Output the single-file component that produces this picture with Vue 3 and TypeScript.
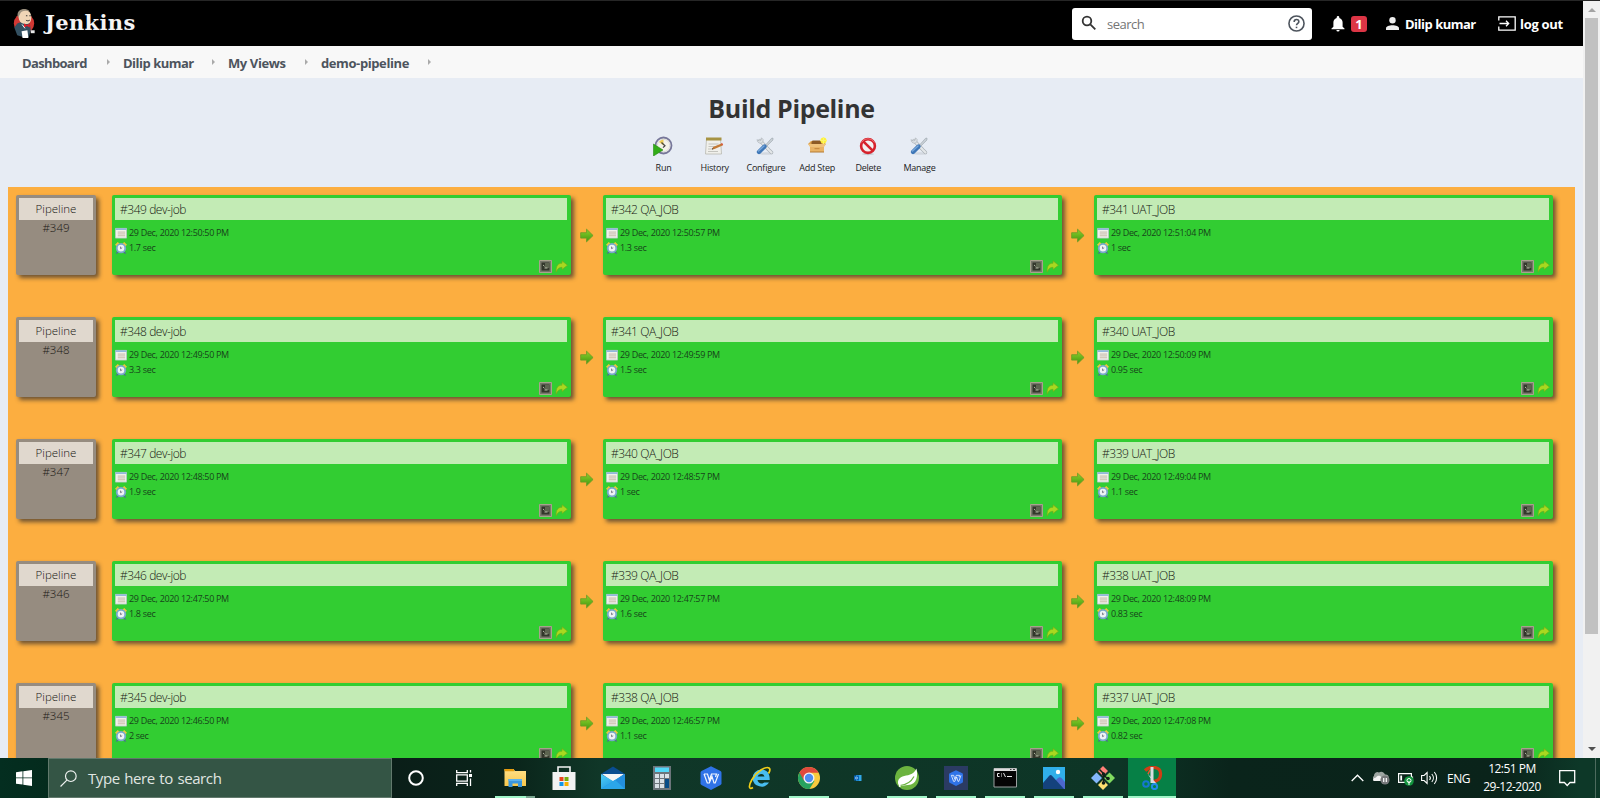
<script setup lang="ts">
interface Stage { name: string; date: string; duration: string }
interface PipelineRow { number: string; stages: Stage[] }
interface TaskItem { icon: string; open?: boolean; active?: boolean; stacked?: boolean }

const crumbs: string[] = ['Dashboard', 'Dilip kumar', 'My Views', 'demo-pipeline']

const tools: { label: string; icon: string }[] = [
  { label: 'Run', icon: 'run' },
  { label: 'History', icon: 'history' },
  { label: 'Configure', icon: 'tools' },
  { label: 'Add Step', icon: 'box' },
  { label: 'Delete', icon: 'delete' },
  { label: 'Manage', icon: 'tools' },
]

const row = (n: number, times: string[], durations: string[]): PipelineRow => ({
  number: `#${n}`,
  stages: [`#${n} dev-job`, `#${n - 7} QA_JOB`, `#${n - 8} UAT_JOB`].map((name, i) => ({
    name,
    date: `29 Dec, 2020 ${times[i]} PM`,
    duration: `${durations[i]} sec`,
  })),
})

const rows: PipelineRow[] = [
  row(349, ['12:50:50', '12:50:57', '12:51:04'], ['1.7', '1.3', '1']),
  row(348, ['12:49:50', '12:49:59', '12:50:09'], ['3.3', '1.5', '0.95']),
  row(347, ['12:48:50', '12:48:57', '12:49:04'], ['1.9', '1', '1.1']),
  row(346, ['12:47:50', '12:47:57', '12:48:09'], ['1.8', '1.6', '0.83']),
  row(345, ['12:46:50', '12:46:57', '12:47:08'], ['2', '1.1', '0.82']),
]

const tasks: TaskItem[] = [
  { icon: 'explorer', open: true, stacked: true },
  { icon: 'store' },
  { icon: 'mail' },
  { icon: 'calc' },
  { icon: 'wps' },
  { icon: 'ie' },
  { icon: 'chrome', open: true },
  { icon: 'outlook' },
  { icon: 'spring', open: true },
  { icon: 'wpsbox', open: true },
  { icon: 'cmd', open: true },
  { icon: 'photos', open: true },
  { icon: 'git', open: true },
  { icon: 'snip', open: true, active: true },
]
</script>

<template>
  <div class="screen">
    <svg class="defs" aria-hidden="true">
      <defs>
        <linearGradient id="gArrow" x1="0" y1="0" x2="0" y2="1">
          <stop offset="0" stop-color="#8fd02c" /><stop offset="1" stop-color="#3f9a10" />
        </linearGradient>
        <linearGradient id="gMail" x1="0" y1="0" x2="1" y2="1">
          <stop offset="0" stop-color="#4fd0f8" /><stop offset="1" stop-color="#1385d8" />
        </linearGradient>
        <linearGradient id="gFolder" x1="0" y1="0" x2="0" y2="1">
          <stop offset="0" stop-color="#ffe08a" /><stop offset="1" stop-color="#f9c84a" />
        </linearGradient>
      </defs>
      <symbol id="i-run" viewBox="0 0 20 20">
        <circle cx="10.5" cy="9.5" r="8" fill="#f3f3ea" stroke="#77779a" stroke-width="1.8" />
        <circle cx="10.5" cy="9.5" r="6.2" fill="none" stroke="#c9c9cf" stroke-width=".6" />
        <path d="M10.500 9.500V3.500A6 6 0 0 0 6 6z" fill="#edcd55" />
        <path d="M8.500 6.500l3.500 3.200-2 2" fill="none" stroke="#444" stroke-width="1.200" />
        <path d="M.5 8l9.500 6L.5 20z" fill="#32ad17" stroke="#278a14" stroke-width=".6" />
      </symbol>
      <symbol id="i-history" viewBox="0 0 20 20">
        <path d="M2.500 3h14l1 15h-16z" fill="#f0f0eb" stroke="#b9b9b0" stroke-width=".8" />
        <path d="M2 1.500h15.500v3H2z" fill="#a69343" />
        <path d="M4.500 8h10M4.500 10.500h8M4 13h5M4 15.500h10" stroke="#c4c4be" />
        <path d="M8 13.500l1-2.500 8.500-3.500 1 2-8 3.500z" fill="#c47a35" />
        <path d="M17 7.500l1.200-.4 1 2-1.200.5z" fill="#d95035" /><path d="M8 13.500l.5-1.500 1 1z" fill="#333" />
      </symbol>
      <symbol id="i-tools" viewBox="0 0 20 20">
        <ellipse cx="11" cy="17.500" rx="7" ry="1.300" fill="#d3d8df" />
        <path d="M5 4.500l9 9.500 2.500 2.500" stroke="#a8afb5" stroke-width="3.400" stroke-linecap="round" />
        <path d="M5 4.500l9 9.500 2.500 2.500" stroke="#e4e7e9" stroke-width="2.200" stroke-linecap="round" />
        <path d="M2.200 3.500a3.200 3.200 0 0 0 5.500 2.700A3.200 3.200 0 0 0 6.500 1.800L6 4.500 3.500 5z" fill="#dfe3e6" stroke="#a6adb3" stroke-width=".6" />
        <path d="M18 2l-1.500.3-6 6.700 1.300 1.200L18 4z" fill="#c7ced4" stroke="#929ca5" stroke-width=".5" />
        <path d="M9.500 10.500L4 16" stroke="#3f77b7" stroke-width="4.400" stroke-linecap="round" />
        <path d="M9 10L3.500 15" stroke="#78a8dc" stroke-width="1.400" stroke-linecap="round" />
      </symbol>
      <symbol id="i-box" viewBox="0 0 20 20">
        <path d="M1 8l3-3h11l4 3-2 2H3z" fill="#dda24e" /><path d="M4.500 6.500l1-2h8l1 2v3h-10z" fill="#8d5a26" />
        <path d="M3 9h14v7H3z" fill="#e9b365" /><path d="M1 8l2 3h14l2-3z" fill="#f0c27c" /><path d="M3 16h14" stroke="#b47a35" />
        <path d="M7.500 12h5v1.200h-5z" fill="#c98c43" />
        <circle cx="16.500" cy="4.500" r="3" fill="#fdf23c" /><path d="M16.500 1v7M13 4.500h7" stroke="#fdf56c" />
      </symbol>
      <symbol id="i-delete" viewBox="0 0 20 20">
        <ellipse cx="10" cy="18" rx="6" ry="1.200" fill="#c7ccd2" />
        <circle cx="10" cy="10" r="6.900" fill="#f3f0f0" stroke="#d6222c" stroke-width="2.600" />
        <path d="M5.300 5.300l9.400 9.400" stroke="#d6222c" stroke-width="2.600" /><path d="M3.500 6.500a7.500 7.500 0 0 1 13 0" fill="none" stroke="#f0787b" stroke-width=".8" />
      </symbol>
      <symbol id="i-explorer" viewBox="0 0 24 24">
        <path d="M1.500 3h9l1.500 2h11v15h-21.500z" fill="url(#gFolder)" /><path d="M1.500 3h9l1 2.200H1.500z" fill="#e69b0c" />
        <path d="M5.500 21v-8h13.500v8h-4v-3.500h-5.500V21z" fill="#3b97dd" /><path d="M5.500 13h13.500v2h-13.500z" fill="#5eb2ec" />
      </symbol>
      <symbol id="i-store" viewBox="0 0 24 24">
        <path d="M6 7V1h12v6" fill="none" stroke="#f2f2f2" stroke-width="1.600" /><path d="M.5 6h23v18H.5z" fill="#f2f2f2" />
        <path d="M7.500 11h4v4h-4z" fill="#e8431b" /><path d="M12.500 11h4v4h-4z" fill="#74ad0b" /><path d="M7.500 16h4v4h-4z" fill="#1396e8" /><path d="M12.500 16h4v4h-4z" fill="#f9b000" />
      </symbol>
      <symbol id="i-mail" viewBox="0 0 24 24">
        <path d="M0 8L12 .5 24 8v8H0z" fill="#0a4d90" /><path d="M1 8h22L12 16z" fill="#f5f5f5" />
        <path d="M0 8l12 7 12-7v15H0z" fill="url(#gMail)" /><path d="M0 23L24 8v15z" fill="#238fdd" /><path d="M0 23l14-9 10 9z" fill="#2ba6ea" />
      </symbol>
      <symbol id="i-calc" viewBox="0 0 24 24">
        <path d="M3 0h18v24H3z" fill="#6c757b" /><path d="M5 1.500h14v4.500H5z" fill="#53d8f8" />
        <path d="M5 8h4v4H5zM10 8h4v4h-4zM15 8h4v4h-4zM5 13h4v4H5zM10 13h4v4h-4zM5 18h4v4H5zM10 18h4v4h-4z" fill="#d8e0e6" /><path d="M15 13h4v9h-4z" fill="#064b86" />
      </symbol>
      <symbol id="i-wps" viewBox="0 0 24 24">
        <path d="M12 .2L21.500 5a2 2 0 0 1 1 1.700v10.600a2 2 0 0 1-1 1.700L12 24l-9.500-5a2 2 0 0 1-1-1.700V6.700a2 2 0 0 1 1-1.700z" fill="#2f73e8" />
        <path d="M5 8h3.500l1.800 6L12.500 8h5l-1 3M5 8l3.300 9h2l2.700-6.500L15 17h1.200L19.500 8" fill="none" stroke="#f2f6ff" stroke-width="1.200" />
      </symbol>
      <symbol id="i-ie" viewBox="0 0 24 24">
        <path d="M21 16.500A9 9 0 0 1 4.500 12.500 8.800 8.800 0 0 1 13 3.500c6 0 9 4 8.700 10.500H9.500a4.200 4.200 0 0 0 6.800 2.500z" fill="#48bdf0" /><path d="M9.500 10.500a3.700 3.700 0 0 1 7 0z" fill="#0d3424" />
        <path d="M5 21.500c-4 2.500-5-1-1-8C9 5 18 0 21 2c1.500 1 1 3-.5 5.500" fill="none" stroke="#f2cf18" stroke-width="1.700" />
      </symbol>
      <symbol id="i-chrome" viewBox="0 0 24 24">
        <circle cx="12" cy="12" r="11" fill="#f8ca3e" /><path d="M12 12L2.500 6.500A11 11 0 0 0 12.500 23l5-8z" fill="#26a260" />
        <path d="M2.500 6.500A11 11 0 0 1 21.600 6.800H12l-5 8z" fill="#df493d" /><circle cx="12" cy="12" r="5.500" fill="#f2f3f5" /><circle cx="12" cy="12" r="4.200" fill="#4d8cf2" />
      </symbol>
      <symbol id="i-outlook" viewBox="0 0 24 24">
        <path d="M10 9h5.500v6H10z" fill="#31a8e8" /><path d="M8 9.500h5v5H8z" fill="#0863b6" /><circle cx="10.500" cy="12" r="1" fill="none" stroke="#cfeaff" stroke-width=".7" />
      </symbol>
      <symbol id="i-spring" viewBox="0 0 24 24">
        <circle cx="12" cy="12" r="12" fill="#6cb33f" />
        <path d="M21.500 2.500c1.500 7 .8 16-8.500 16.500-3 .5-6 1-8.500 1-3-3-1.500-8 3-9.500 4.500-1.500 11-1 14-8z" fill="#fff" /><path d="M5 19.500c6-.5 11-3.500 14-9" fill="none" stroke="#6cb33f" stroke-width="1.200" /><circle cx="4.800" cy="20" r="1" fill="#fff" />
      </symbol>
      <symbol id="i-wpsbox" viewBox="0 0 24 24">
        <path d="M0 0h24v24H0z" fill="#2b3b63" /><use href="#i-wps" x="4" y="4" width="16" height="16" />
      </symbol>
      <symbol id="i-cmd" viewBox="0 0 24 24">
        <path d="M1 2.500h22.500v18.500H1z" fill="#050505" stroke="#9aa0a0" /><path d="M1 2.500h22.500v2.500H1z" fill="#dcdcdc" /><path d="M17 3.500h1.500M20 3.500h2" stroke="#444" />
        <path d="M6.500 7.500h-2v3h2M8.500 7.500v1M8.500 9.500v1M10.500 7l2 4M14 10.500h5" fill="none" stroke="#e8e8e8" stroke-width="1" />
      </symbol>
      <symbol id="i-photos" viewBox="0 0 24 24">
        <path d="M1 1h22v22H1z" fill="#30afea" /><path d="M12 23l-3-4 7-7c1.500-1.300 2.500-1 3.500 0l3.500 4v7z" fill="#4c67cc" /><path d="M1 17l6-7c1.200-1.200 2-1.200 3.200 0L22 23H1z" fill="#14427d" /><circle cx="16" cy="6" r="2.200" fill="#fff" />
      </symbol>
      <symbol id="i-git" viewBox="0 0 24 24">
        <path d="M12 0l5 5-5 5-5-5z" fill="#ff8078" /><path d="M18.500 6.500L24 12l-5.500 5.500L13 12z" fill="#80db60" /><path d="M5.500 6.500L11 12l-5.500 5.500L0 12z" fill="#84b7fc" /><path d="M12 14l5 5-5 5-5-5z" fill="#fce070" />
        <path d="M8.500 3.500l4 4v10M12.500 9l4.500 4" fill="none" stroke="#101f18" stroke-width="1.500" /><circle cx="12.500" cy="8" r="1.700" fill="#101f18" /><circle cx="12.500" cy="17" r="1.800" fill="#101f18" /><circle cx="17" cy="12.500" r="1.800" fill="#101f18" />
      </symbol>
      <symbol id="i-snip" viewBox="0 0 24 24">
        <path d="M5 4.500C10-.5 20 .5 20.500 7s-3.500 8.500-9 8.500" fill="none" stroke="#cf3d15" stroke-width="3.200" /><path d="M8 8l2-4" stroke="#e85a2a" stroke-width="1.500" />
        <path d="M10.500 1h3v16h-3zM7.500 7.500l9 10-2 1z" fill="#d9dde0" /><circle cx="6" cy="18" r="2.800" fill="none" stroke="#1677d2" stroke-width="2" /><circle cx="14.500" cy="20.500" r="2.600" fill="none" stroke="#1f8be8" stroke-width="2" />
      </symbol>
      <symbol id="i-redo" viewBox="0 0 13 13">
        <path d="M1.200 12C.5 5.500 3.500 3.200 7 3.200V.8l5.500 4.400-5.500 4.300V7.300C4.500 7.300 2.500 8.500 1.200 12z" fill="#a8d820" stroke="#6fb01a" stroke-width=".7" />
      </symbol>
      <symbol id="i-console" viewBox="0 0 13 13">
        <path d="M0 0h13v13H0z" fill="#77786a" /><path d="M.5 .5h12v12H.5z" fill="none" stroke="#a8a38e" /><path d="M2.500 2.500h8v8h-8z" fill="#33372b" /><path d="M6 3h4.500v5H6z" fill="#5d6550" /><path d="M4 5l1.500 1.300M5.500 8h3" fill="none" stroke="#c4cab4" stroke-width=".9" />
      </symbol>
      <symbol id="i-calendar" viewBox="0 0 13 12">
        <path d="M.5 1h12v10.500H.5z" fill="#f1f1ea" stroke="#b9c8c8" stroke-width=".8" /><path d="M.5 1h12v1.700H.5z" fill="#8db5dd" /><path d="M3 5h8M3 7h8M3 9h8" stroke="#c3b5a4" />
      </symbol>
      <symbol id="i-clock" viewBox="0 0 13 13">
        <path d="M0 3l3-3 2 2-3 3zM13 3l-3-3-2 2 3 3z" fill="#edc93c" /><path d="M1.500 12.500L4 10M11.500 12.500L9 10" stroke="#49748d" stroke-width="1.600" />
        <circle cx="6.500" cy="6.700" r="4.600" fill="#eef3f4" stroke="#79a8cc" stroke-width="2" /><path d="M6 5v2.200l1.800-.9" fill="none" stroke="#667" stroke-width=".9" />
      </symbol>
    </svg>

    <div class="browser">
      <div class="page">
        <header class="header">
          <svg class="mascot" viewBox="0 0 22 32">
            <circle cx="11" cy="16" r="10.500" fill="#d33833" />
            <path d="M4 16l-3 4 3 8 6 2h6l2-7-1-7-5-3z" fill="#335061" />
            <path d="M5 8C5 3 9 1 12 1.500s6.500 3 6.500 8-2 7-5.500 7-6-1-7-4z" fill="#f0d6b7" />
            <path d="M5 10c-2-5 1-9 6-9 3 0 5 1 6 2.500C12 2 8 3 7 6z" fill="#9c917f" />
            <path d="M13 8h1.500M16.500 8H18M13 12.500c1 1 3 1 4 0" fill="none" stroke="#333" /><path d="M11 16l3 1.500 3-1.500v4l-3-1.500-3 1.500z" fill="#e01d28" />
            <path d="M8.500 24l6-1 1 8h-6z" fill="#fff" /><path d="M18 23h4v3h-4z" fill="#e8e8e8" /><path d="M9 17l3 4" stroke="#fff" />
          </svg>
          <span class="brand">Jenkins</span>
          <div class="search">
            <svg class="magnifier" viewBox="0 0 16 16"><circle cx="6" cy="6" r="4.300" /><path d="M9.300 9.300l5 5" /></svg>
            <span class="placeholder">search</span>
            <svg class="help" viewBox="0 0 16 16"><circle cx="8" cy="8" r="7.100" /><path d="M5.800 6.500c0-3 4.400-2.800 4.400-.2C10.200 7.800 8 8 8 9.700" /><path d="M8 11v1.400" /></svg>
          </div>
          <svg class="bell" viewBox="0 0 14 16"><path d="M7 0a1.300 1.300 0 0 1 1.300 1.300v.6C10.500 2.500 11.600 4.400 11.600 6.500v4.300L13.500 12.500v.7H.5v-.7l1.900-1.700V6.500c0-2.100 1.100-4 3.300-4.600v-.6A1.300 1.300 0 0 1 7 0zM5.400 14h3.200a1.600 1.600 0 0 1-3.200 0z" fill="#fff" /></svg>
          <span class="badge">1</span>
          <svg class="person" viewBox="0 0 13 13"><circle cx="6.500" cy="3.300" r="3.200" fill="#eee" /><path d="M0 13v-1.700C0 7.200 13 7.200 13 11.300V13z" fill="#eee" /></svg>
          <span class="user">Dilip kumar</span>
          <svg class="exit" viewBox="0 0 18 15"><path d="M.8 4.500V.8h16.400v13.400H.8v-3.700M1.500 7.500h9M8 4.800l2.700 2.700L8 10.200" /></svg>
          <span class="logout">log out</span>
        </header>

        <nav class="crumbs">
          <template v-for="(c, i) in crumbs" :key="c">
            <span :class="['crumb', `crumb-${i}`]">{{ c }}</span><i class="sep"></i>
          </template>
        </nav>

        <h1 class="title">Build Pipeline</h1>
        <div class="tools">
          <div v-for="t in tools" :key="t.label" class="tool">
            <svg class="tool-icon"><use :href="`#i-${t.icon}`" /></svg>
            <span>{{ t.label }}</span>
          </div>
        </div>

        <main class="board">
          <div v-for="r in rows" :key="r.number" class="row">
            <div class="box pipeline">
              <div class="head">Pipeline</div>
              <div class="num">{{ r.number }}</div>
            </div>
            <template v-for="(s, i) in r.stages" :key="s.name">
              <svg v-if="i > 0" class="next" viewBox="0 0 15 15"><path d="M.7 4.500h6.300V.7L14 7.500 7 14.300v-4H.7z" fill="url(#gArrow)" stroke="#6c9b26" stroke-width=".9" /></svg>
              <div class="box stage">
                <div class="head">{{ s.name }}</div>
                <div class="meta date"><svg class="mini"><use href="#i-calendar" /></svg><span>{{ s.date }}</span></div>
                <div class="meta"><svg class="mini"><use href="#i-clock" /></svg><span>{{ s.duration }}</span></div>
                <div class="actions"><svg><use href="#i-console" /></svg><svg><use href="#i-redo" /></svg></div>
              </div>
            </template>
          </div>
        </main>
      </div>
      <div class="scrollbar">
        <i class="up"></i>
        <div class="thumb"></div>
        <i class="down"></i>
      </div>
    </div>

    <footer class="taskbar">
      <div class="start"><svg viewBox="0 0 16 16"><path d="M0 2.200L6.500 1.300v6.200H0zM7.300 1.200L16 0v7.500H7.300zM0 8.300h6.500v6.300L0 13.700zM7.300 8.300H16V16l-8.700-1.200z" fill="#fff" /></svg></div>
      <div class="win-search">
        <svg viewBox="0 0 16 16"><circle cx="10.200" cy="5.800" r="5" /><path d="M6.500 9.500L.5 15.500" /></svg>
        <span>Type here to search</span>
      </div>
      <div class="cell"><svg class="cortana" viewBox="0 0 16 16"><circle cx="8" cy="8" r="6.800" /></svg></div>
      <div class="cell"><svg class="taskview" viewBox="0 0 17 16"><path d="M.7 0v2.700h10.600V0M.7 16v-2.700h10.600V16M.7 4.900h10.600v6.200H.7zM14.500 0v2.500M14.500 8.500V16" /><path d="M13 4h3v3h-3z" fill="#fff" stroke="none" /></svg></div>
      <div class="tasks">
        <div v-for="t in tasks" :key="t.icon" :class="['cell', { open: t.open, active: t.active, stacked: t.stacked }]">
          <svg class="app"><use :href="`#i-${t.icon}`" /></svg>
        </div>
      </div>
      <div class="tray">
        <svg class="chevron" viewBox="0 0 13 8"><path d="M.7 7l5.800-5.800L12.300 7" /></svg>
        <svg class="cloud" viewBox="0 0 17 14"><path d="M1 10a3 3 0 0 1 0-5 3.500 3.500 0 0 1 5-3.500 4 4 0 0 1 6 2 3 3 0 0 1 1 6.500z" fill="#9da5a1" /><path d="M0 9a3 3 0 0 1 3-2.500C4 4 7.500 4 8.500 6.500V10H1z" fill="#f2f2f2" /><circle cx="12" cy="9" r="4.600" fill="#77797b" /><path d="M10.700 7v4M13.300 7v4" stroke="#fff" stroke-width="1.200" /></svg>
        <svg class="battery" viewBox="0 0 16 13"><path d="M.6 .6h12.800v8.800H.6zM14.500 3.500v3" fill="none" stroke="#fff" stroke-width="1.200" /><path d="M2.300 2.500h1.800v5H2.300z" fill="#fff" /><circle cx="11" cy="8" r="4.800" fill="#12933d" /><path d="M11 12V8" stroke="#fff" /><circle cx="11" cy="7.500" r="2" fill="none" stroke="#fff" /></svg>
        <svg class="speaker" viewBox="0 0 17 14"><path d="M.6 4.500h2.500l3-3v11l-3-3H.6zM8.500 5a3 3 0 0 1 0 4M10.800 3a6 6 0 0 1 0 8M13.300 1a9 9 0 0 1 0 12" /></svg>
        <span class="lang">ENG</span>
        <div class="clock"><span class="time">12:51 PM</span><span class="day">29-12-2020</span></div>
        <svg class="note" viewBox="0 0 17 17"><path d="M.7 .7h15v11.800H11l-2.800 3-2.800-3H.7z" /></svg>
      </div>
    </footer>
  </div>
</template>

<style>
html, body { margin: 0; overflow: hidden; }
</style>

<style scoped>
.screen { width: 1600px; height: 798px; overflow: hidden; display: flex; flex-direction: column; font-family: "Open Sans", "Noto Sans", sans-serif; color: #333; white-space: nowrap; }
.defs { position: absolute; width: 0; height: 0; }
svg { flex: none; display: block; }
.browser { height: 758px; display: flex; border-top: 1px solid #262626; box-sizing: border-box; background: #e7ecf4; overflow: hidden; }
.page { width: 1583px; }
.header { height: 45px; background: #000; display: flex; align-items: center; color: #fff; font-weight: 700; font-size: 13px; }
.mascot { width: 22px; height: 31px; margin: 0 0 0 13px; }
.brand { font: 700 21px/28px "DejaVu Serif", serif; letter-spacing: 0.35px; margin: 0 0 2px 10px; width: 100px; color: #f4f4f4; }
.search { width: 240px; height: 32px; margin-left: 927px; background: #fff; border-radius: 3px; display: flex; align-items: center; box-sizing: border-box; }
.magnifier { width: 16px; height: 16px; margin-left: 9px; margin-bottom: 1px; fill: none; stroke: #333; stroke-width: 1.8; }
.placeholder { color: #757575; font-weight: 400; font-size: 13px; letter-spacing: -0.5px; margin-left: 10px; flex: 1; padding-top: 1px; }
.help { width: 17px; height: 17px; margin-right: 7px; fill: none; stroke: #4d545d; stroke-width: 1.500; }
.bell { width: 14px; height: 16px; margin-left: 19px; }
.badge { width: 16px; height: 16px; margin-left: 6px; background: #dc3545; border-radius: 3px; font-size: 13px; line-height: 16px; text-align: center; }
.person { width: 13px; height: 13px; margin-left: 19px; }
.user { width: 71px; margin-left: 6px; letter-spacing: -0.5px; padding-top: 1px; }
.exit { width: 18px; height: 15px; margin-left: 22px; fill: none; stroke: #fff; stroke-width: 1.300; }
.logout { margin-left: 4px; letter-spacing: -0.3px; padding-top: 1px; }
.crumbs { height: 32px; background: #f8f8f8; display: flex; align-items: center; font-size: 13px; font-weight: 700; color: #4d545d; padding-left: 22px; }
.crumb { letter-spacing: -0.5px; padding-top: 2px; }
.crumb-0 { width: 85px; letter-spacing: -0.65px; }
.crumb-1, .crumb-2, .crumb-3 { margin-left: 13px; }
.crumb-1 { width: 89px; }
.crumb-2 { width: 77px; letter-spacing: -0.4px; }
.crumb-3 { width: 107px; letter-spacing: -0.4px; }
.sep { border-left: 3px solid #aaa; border-top: 3px solid transparent; border-bottom: 3px solid transparent; margin-bottom: 1px; }
.title { margin: 11px 0 0; height: 39px; text-align: center; font-size: 25px; line-height: 38px; font-weight: 700; letter-spacing: -0.35px; color: #333; }
.tools { display: flex; justify-content: center; margin: 8px 0 0; height: 51px; }
.tool { width: 51.200px; display: flex; flex-direction: column; align-items: center; font-size: 9px; line-height: 12px; letter-spacing: -0.25px; color: #222; }
.tool-icon { width: 20px; height: 20px; margin: 0 1px 6px 0; }
.board { margin: 0 8px; background: #fcae40; padding: 8px 8px 0; display: flex; flex-direction: column; gap: 42px; }
.row { display: flex; height: 80px; }
.box { box-sizing: border-box; height: 80px; border-radius: 2px; box-shadow: 3px 3px 4px rgba(50, 45, 45, .7); padding: 3px; }
.head { height: 22px; line-height: 23px; font-size: 12px; letter-spacing: -0.45px; color: #161612; font-weight: 300; }
.pipeline { width: 80px; background: #968c80; margin-right: 16px; text-align: center; font-size: 11.500px; color: #1c1916; font-weight: 300; }
.pipeline .head { background: #e0d8ce; letter-spacing: 0; font-size: 11.500px; line-height: 22px; }
.num { line-height: 16px; }
.stage { width: 459px; background: #32cd32; padding-right: 4px; }
.stage .head { background: #c3ebb5; padding-left: 5px; }
.date { margin-top: 5px; }
.meta { display: flex; align-items: center; height: 15px; font-size: 9px; letter-spacing: -0.32px; color: #17451a; }
.mini { width: 12px; height: 12px; margin-right: 2px; }
.actions { display: flex; justify-content: flex-end; gap: 3px; margin: 5px -1px 0 0; }
.actions svg { width: 13px; height: 13px; }
.next { width: 14px; height: 15px; margin: 33px 9px 0; }
.scrollbar { width: 17px; background: #f1f1f1; display: flex; flex-direction: column; align-items: center; }
.up { border: 4px solid transparent; border-top: 0; border-bottom: 4px solid #a3a3a3; margin: 7px 0 6px; }
.thumb { width: 13px; height: 616px; background: #c1c1c1; }
.down { border: 4px solid transparent; border-bottom: 0; border-top: 4px solid #505050; margin-top: 113px; }
.taskbar { height: 40px; display: flex; background: linear-gradient(90deg, #042e20 0, #042b1d 48px, #0a1e18 392px, #0a241a 510px, #103728 600px, #0d3526 1120px, #0a241b 1230px, #0a231a 1500px, #0d3828 1580px); }
.start { width: 48px; display: flex; align-items: center; justify-content: center; }
.start svg { width: 16px; height: 16px; }
.win-search { width: 344px; box-sizing: border-box; background: #345545; border: 1px solid #61796c; display: flex; align-items: center; color: #e0e6e2; font-size: 15px; letter-spacing: -0.52px; word-spacing: 1px; }
.win-search svg { width: 17px; height: 17px; margin: 0 11px 0 11px; fill: none; stroke: #f0f3f1; stroke-width: 1.100; }
.win-search span { letter-spacing: -0.4px; }
.cell { width: 48px; height: 40px; display: flex; align-items: center; justify-content: center; position: relative; }
.cortana { width: 16px; height: 16px; fill: none; stroke: #fff; stroke-width: 2; }
.taskview { width: 17px; height: 16px; fill: none; stroke: #fff; stroke-width: 1.300; }
.tasks { display: flex; gap: 1px; margin-left: 3px; }
.app { width: 24px; height: 24px; }
.open::after { content: ""; position: absolute; left: 4px; right: 4px; bottom: 0; height: 2px; background: #a0f5c8; }
.stacked::after { background: linear-gradient(90deg, #a0f5c8 31px, #78a58f 31px); }
.active { background: #068046; }
.active::after { left: 0; right: 0; }
.tray { flex: 1; display: flex; align-items: center; color: #fff; padding-left: 175px; box-sizing: border-box; border-right: 1px solid #4d6b5e; margin-right: 4px; }
.chevron { width: 13px; height: 8px; fill: none; stroke: #fff; stroke-width: 1.300; }
.cloud { width: 17px; height: 14px; margin-left: 9px; }
.battery { width: 16px; height: 13px; margin: 2px 0 0 8px; }
.speaker { width: 17px; height: 14px; margin-left: 7px; fill: none; stroke: #fff; stroke-width: 1.100; }
.lang { font-size: 12px; margin-left: 9px; width: 24px; letter-spacing: -0.5px; }
.clock { width: 60px; margin-left: 11px; display: flex; flex-direction: column; align-items: center; font-size: 12px; line-height: 18px; letter-spacing: -0.5px; }
.note { width: 17px; height: 17px; margin-left: 17px; fill: none; stroke: #fff; stroke-width: 1.300; }
</style>
